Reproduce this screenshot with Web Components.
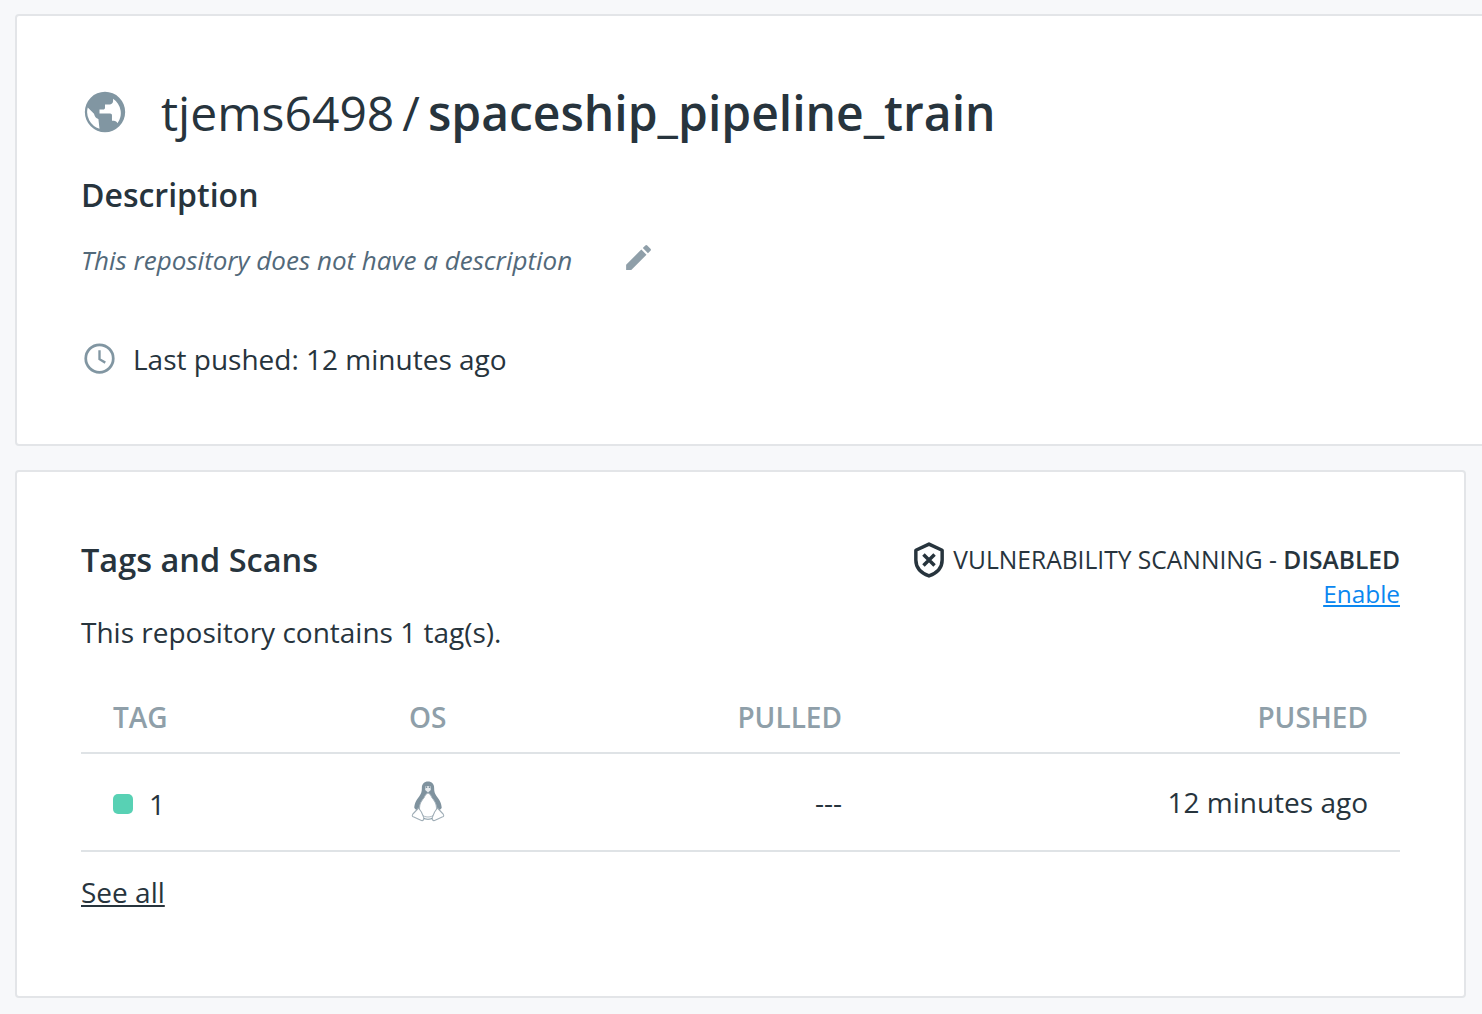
<!DOCTYPE html>
<html>
<head>
<meta charset="utf-8">
<style>
  html, body { margin: 0; height: 1014px; overflow: hidden; background: #f7f8fa; }
  body { font-family: "Open Sans", sans-serif; color: #27343d; }
</style>
</head>
<body>
<repo-page>
  <repo-summary owner="tjems6498" name="spaceship_pipeline_train" pushed="12 minutes ago"></repo-summary>
  <tags-panel></tags-panel>
</repo-page>

<script>
let wrapFn = text => {
  let tmpl = document.createElement('template')
  tmpl.innerHTML = text
  return document.importNode(tmpl.content, true)
}

class RepoPage extends HTMLElement {
  constructor () {
    super()
    this.attachShadow({mode: 'open'})
  }

  connectedCallback () {
    this.shadowRoot.appendChild(wrapFn(`
      <style>
      :host {
        display: flex;
        flex-direction: column;
        gap: 24px;
        padding: 14px 16px 0 15px;
      }
      </style>
      <slot></slot>`))
  }
}

class RepoSummary extends HTMLElement {
  constructor () {
    super()
    this.attachShadow({mode: 'open'})
  }

  connectedCallback () {
    let owner = this.getAttribute('owner')
    let name = this.getAttribute('name')
    let pushed = this.getAttribute('pushed')
    this.shadowRoot.appendChild(wrapFn(`
      <style>
      * { box-sizing: border-box; }
      :host {
        display: block;
        box-sizing: border-box;
        height: 432px;
        margin-right: -40px;
        padding: 67px 0 0 64px;
        background: #fff;
        border: 2px solid #e3e5e8;
        border-radius: 4px;
      }
      .title { display: flex; align-items: center; height: 60px; font-size: 48px; line-height: 60px; }
      .title svg { width: 44px; height: 44px; margin: -2px 34px 0 2px; flex: none; }
      .title b { font-weight: 600; margin-left: 8px; }
      .slash { margin-left: 8px; }
      h2 { margin: 31px 0 0; font-size: 32px; line-height: 42px; font-weight: 600; }
      .desc { display: flex; align-items: center; height: 40px; margin-top: 24px; }
      .desc i { font-size: 26px; color: #52697a; width: 541px; }
      .desc svg { width: 33px; height: 33px; margin-top: -5px; }
      .pushed { display: flex; align-items: center; height: 40px; margin-top: 59px; font-size: 28px; }
      .pushed svg { width: 33px; height: 33px; margin: -2px 17px 0 2px; flex: none; }
      </style>
      <div class="title">
        <svg viewBox="0 0 24 24"><path fill="#8196a2" fill-rule="evenodd" d="M12 1a11 11 0 1 0 0 22 11 11 0 0 0 0-22zM2.600 9.600 6 13c.5 1.600 1 2.400 2.400 2.800l.6 5.300A9.400 9.400 0 0 1 2.600 9.600zM18.800 18.200c-.3-.9-1.100-1.400-2-1.400h-1v-3c0-.6-.4-1-1-1H9v-2.100h2c.6 0 1-.4 1-1V7.900h2.500c1 0 1.900-.8 1.900-1.900V4.800a9.400 9.400 0 0 1 2.400 13.400z"/></svg>
        <span>${owner}</span><span class="slash">/</span><b>${name}</b>
      </div>
      <h2>Description</h2>
      <div class="desc">
        <i>This repository does not have a description</i>
        <svg viewBox="0 0 24 24"><path fill="#8f9fa9" d="M3 17.250V21h3.750L17.810 9.940l-3.750-3.750L3 17.250zM20.710 7.040a1 1 0 0 0 0-1.410l-2.340-2.340a1 1 0 0 0-1.410 0l-1.830 1.830 3.750 3.750 1.830-1.830z"/></svg>
      </div>
      <div class="pushed">
        <svg viewBox="0 0 24 24" fill="none" stroke="#8196a2" stroke-width="2"><circle cx="12" cy="12" r="10"/><path d="M12 6v6.500l4.200 2.500" stroke-width="1.700"/></svg>
        <span>Last pushed: ${pushed}</span>
      </div>`))
  }
}

class TagsPanel extends HTMLElement {
  constructor () {
    super()
    this.attachShadow({mode: 'open'})
  }

  connectedCallback () {
    this.shadowRoot.appendChild(wrapFn(`
      <style>
      * { box-sizing: border-box; }
      :host {
        display: block;
        box-sizing: border-box;
        height: 528px;
        padding: 69px 64px 0 64px;
        background: #fff;
        border: 2px solid #e3e5e8;
        border-radius: 4px;
      }
      .top { display: flex; justify-content: space-between; }
      h2 { margin: 0; font-size: 32.500px; line-height: 38px; font-weight: 600; }
      .scan { margin-top: 1px; text-align: right; font-size: 24.600px; line-height: 34px; }
      .scan .line { display: flex; align-items: center; justify-content: flex-end; }
      .scan svg { width: 34px; height: 36px; margin-right: 7px; }
      .scan b { font-weight: 600; }
      .scan a { display: block; color: #0b87f0; text-decoration: underline; font-size: 24.400px; line-height: 32px; }
      p { margin: 2px 0 0; font-size: 28px; line-height: 40px; }
      </style>
      <div class="top">
        <h2>Tags and Scans</h2>
        <div class="scan">
          <div class="line">
            <svg viewBox="0 0 24 26"><path fill="none" stroke="#27343d" stroke-width="2.500" stroke-linejoin="round" d="M12 1.500 21.500 6v7c0 5.500-4 9.500-9.500 11.500C6.500 22.500 2.500 18.500 2.500 13V6z"/><path fill="none" stroke="#27343d" stroke-width="2.500" d="m8 9 8 8m0-8-8 8"/></svg>
            <span>VULNERABILITY SCANNING - <b>DISABLED</b></span>
          </div>
          <a href="#">Enable</a>
        </div>
      </div>
      <p>This repository contains 1 tag(s).</p>
      <tag-table></tag-table>
      <see-all></see-all>`))
  }
}

class TagTable extends HTMLElement {
  constructor () {
    super()
    this.attachShadow({mode: 'open'})
  }

  connectedCallback () {
    this.shadowRoot.appendChild(wrapFn(`
      <style>
      * { box-sizing: border-box; }
      :host { display: block; margin-top: 28px; }
      .row {
        display: grid;
        grid-template-columns: 297px 432px 1fr;
        padding: 0 32px;
        align-items: center;
        border-bottom: 2px solid #dfe3e6;
      }
      .head { height: 74px; padding-top: 2px; font-size: 28px; font-weight: 600; color: #8f9fa9; }
      .os-label { margin-left: -1px; }
      .body { height: 98px; font-size: 28px; }
      .num { text-align: right; }
      .end { text-align: right; }
      .tag { display: flex; align-items: center; padding-top: 3px; }
      .dot { width: 20px; height: 20px; margin-right: 16px; border-radius: 5px; background: #58d1b4; }
      .os svg { display: block; width: 34px; height: 42px; margin: 0 0 0 1px; }
      .cols { display: grid; grid-template-columns: 113px 1fr; align-items: center; }
      </style>
      <div class="row head">
        <span>TAG</span>
        <div class="cols"><span class="os-label">OS</span><span class="num">PULLED</span></div>
        <span class="end">PUSHED</span>
      </div>
      <div class="row body">
        <div class="tag"><span class="dot"></span><span>1</span></div>
        <div class="cols">
          <div class="os">
            <svg viewBox="0 0 36 42" preserveAspectRatio="none">
              <path fill="#7f929e" d="M18 .5c-4 0-6.500 2.500-6.500 6.500 0 3.500-.5 5-2.500 8-2.500 3-5.500 7-5.500 12l2 2h25l2-2c0-5-3-9-5.500-12-2-3-2.500-4.500-2.500-8 0-4-2.500-6.500-6.500-6.500z"/>
              <path fill="#fff" stroke="#a9b6be" stroke-width="1" d="M18 12c-2 1-3 2-4 4.500C11.500 19.500 9 22.500 9 27c0 5 3 9 9 9s9-4 9-9c0-4.500-2.500-7.500-5-10.500-1-2.500-2-3.500-4-4.500z"/>
              <path fill="#fff" stroke="#9fadb6" stroke-width="1.100" stroke-linejoin="round" d="M8 27 2 33c-1 1.500-1 2.500 1 3l8 3.500c2 .5 3-1 2.500-3L11 31zM28 27l6 6c1 1.500 1 2.500-1 3l-8 3.500c-2 .5-3-1-2.500-3L25 31z"/>
              <path fill="none" stroke="#8196a2" stroke-width="1.200" d="M13.500 37.500c3 1 6 1 9 0"/>
              <path fill="#e7ebee" d="M15.500 5h5l.5 4-3 2.500L15 9z"/>
              <path fill="#7f929e" d="M15.800 5.200h1.400v1.800h-1.400zM18.800 5.200h1.400v1.800h-1.400z"/>
            </svg>
          </div>
          <span class="num">---</span>
        </div>
        <span class="end">12 minutes ago</span>
      </div>`))
  }
}

class SeeAll extends HTMLElement {
  constructor () {
    super()
    this.attachShadow({mode: 'open'})
  }

  connectedCallback () {
    this.shadowRoot.appendChild(wrapFn(`
      <style>
      :host { display: block; margin-top: 20px; font-size: 28px; line-height: 40px; }
      a { color: #27343d; }
      </style>
      <a href="#">See all</a>`))
  }
}

customElements.define('repo-page', RepoPage)
customElements.define('repo-summary', RepoSummary)
customElements.define('tags-panel', TagsPanel)
customElements.define('tag-table', TagTable)
customElements.define('see-all', SeeAll)
</script>
</body>
</html>
